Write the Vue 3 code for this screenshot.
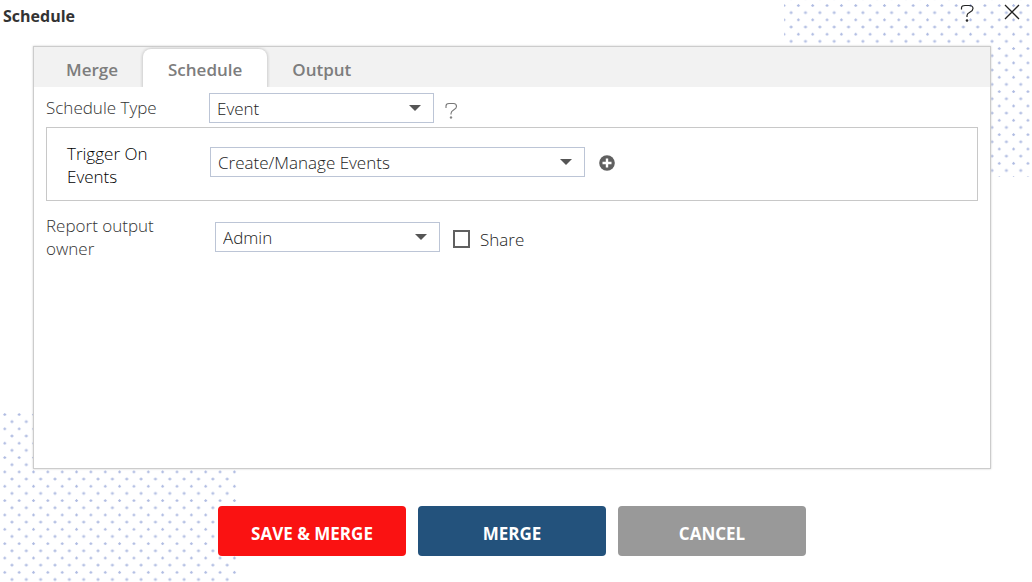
<script setup>
import { ref } from 'vue'

const tabs = ['Merge', 'Schedule', 'Output']
const activeTab = ref('Schedule')
const scheduleType = ref('Event')
const trigger = ref('Create/Manage Events')
const owner = ref('Admin')
const share = ref(false)
</script>

<template>
  <main class="dialog">
    <svg class="dots dots-top" aria-hidden="true">
      <defs>
        <pattern id="dots-top" x="-7.2" y="-1.7" width="14.35" height="14.35" patternUnits="userSpaceOnUse">
          <path d="M7.2 5.7v3M5.7 7.2h3M14.35 -1.5v3M12.85 0h3M0 -1.5v3M-1.5 0h3M0 12.85v3M-1.5 14.35h3M14.35 12.85v3M12.85 14.35h3" stroke="#b0bce2" stroke-width="1.2" />
        </pattern>
      </defs>
      <rect width="100%" height="100%" fill="url(#dots-top)" />
    </svg>
    <svg class="dots dots-bottom" aria-hidden="true">
      <defs>
        <pattern id="dots-bottom" x="-2.4" y="-4.7" width="14.35" height="14.35" patternUnits="userSpaceOnUse">
          <path d="M7.2 5.7v3M5.7 7.2h3M14.35 -1.5v3M12.85 0h3M0 -1.5v3M-1.5 0h3M0 12.85v3M-1.5 14.35h3M14.35 12.85v3M12.85 14.35h3" stroke="#b0bce2" stroke-width="1.2" />
        </pattern>
      </defs>
      <rect width="100%" height="100%" fill="url(#dots-bottom)" />
    </svg>

    <header class="titlebar">
      <h1>Schedule</h1>
      <div class="window-actions">
        <button type="button" class="icon-button" aria-label="Help">
          <svg width="14" height="20" viewBox="0 0 14 20" fill="none" stroke="#222" stroke-width="1.2">
            <path d="M1.500 5.500V4C1.500 2 3 1.500 5 1.500H9C11.500 1.500 13 2.500 13 4.500C13 8.500 7 8 7 11.500V13" />
            <circle cx="7" cy="16.500" r="1" fill="#222" stroke-width="0.600" />
          </svg>
        </button>
        <button type="button" class="icon-button" aria-label="Close">
          <svg width="16" height="16" viewBox="0 0 16 16" stroke="#222" stroke-width="1.300">
            <path d="M1 1L15 15M15 1L1 15" />
          </svg>
        </button>
      </div>
    </header>

    <section class="panel">
      <nav class="tabs" role="tablist">
        <button
          v-for="tab in tabs"
          :key="tab"
          type="button"
          role="tab"
          class="tab"
          :class="{ active: tab === activeTab }"
          :aria-selected="tab === activeTab"
          @click="activeTab = tab"
        >{{ tab }}</button>
      </nav>

      <div class="form">
        <div class="row type-row">
          <label class="label" for="type">Schedule Type</label>
          <div class="select-box">
            <select id="type" v-model="scheduleType"><option>Event</option></select>
            <svg class="arrow" width="12" height="6" viewBox="0 0 12 6"><path d="M0 0H12L6 6Z" fill="#555" /></svg>
          </div>
          <button type="button" class="icon-button hint" aria-label="Schedule type help">
            <svg width="13" height="18" viewBox="0 0 13 18" fill="none" stroke="#777" stroke-width="1.100">
              <path d="M1 6V4C1 2 2.200 1.500 4 1.500H8.500C10.700 1.500 11.500 2.500 11.500 4.500C11.500 8 6 7.500 6 11.500V12.500" />
              <circle cx="6" cy="15.500" r="0.900" fill="#777" stroke-width="0.500" />
            </svg>
          </button>
        </div>

        <div class="row trigger-row">
          <label class="label" for="trigger">Trigger On Events</label>
          <div class="select-box wide">
            <select id="trigger" v-model="trigger"><option>Create/Manage Events</option></select>
            <svg class="arrow" width="12" height="6" viewBox="0 0 12 6"><path d="M0 0H12L6 6Z" fill="#555" /></svg>
          </div>
          <button type="button" class="icon-button add" aria-label="Add event">
            <svg width="16" height="16" viewBox="0 0 16 16">
              <circle cx="8" cy="8" r="7.800" fill="#606060" />
              <path d="M8 3.500V12.500M3.500 8H12.500" stroke="#fff" stroke-width="2.400" />
            </svg>
          </button>
        </div>

        <div class="row owner-row">
          <label class="label" for="owner">Report output owner</label>
          <div class="select-box">
            <select id="owner" v-model="owner"><option>Admin</option></select>
            <svg class="arrow" width="12" height="6" viewBox="0 0 12 6"><path d="M0 0H12L6 6Z" fill="#555" /></svg>
          </div>
          <label class="share"><input v-model="share" type="checkbox" />Share</label>
        </div>
      </div>
    </section>

    <footer class="actions">
      <button type="button" class="action save">SAVE &amp; MERGE</button>
      <button type="button" class="action merge">MERGE</button>
      <button type="button" class="action cancel">CANCEL</button>
    </footer>
  </main>
</template>

<style>
body {
  margin: 0;
  background: #fff;
}
</style>

<style scoped>
* {
  box-sizing: border-box;
}
.dialog {
  position: relative;
  display: flex;
  flex-direction: column;
  min-height: 100vh;
  overflow: hidden;
  isolation: isolate;
  font-family: "Open Sans", "Noto Sans", sans-serif;
  font-size: 17px;
  font-weight: 300;
  line-height: 23px;
  color: #222;
}
button,
select {
  font: inherit;
  color: inherit;
  border: 0;
  margin: 0;
  padding: 0;
  background: none;
}
.dots {
  position: absolute;
  z-index: -1;
}
.dots-top {
  top: 0;
  right: 2px;
  width: 246px;
  height: 177px;
}
.dots-bottom {
  left: 0;
  bottom: 0;
  width: 238px;
  height: 170px;
}
.titlebar {
  display: flex;
  justify-content: space-between;
  height: 46px;
  padding: 4px 12px 0 3px;
}
h1 {
  margin: 0;
  font-size: 16px;
  font-weight: 700;
  line-height: 24px;
  color: #333;
}
.window-actions {
  display: flex;
  align-items: flex-start;
  gap: 30px;
}
.icon-button {
  display: flex;
  cursor: pointer;
}
.panel {
  flex: 1;
  margin: 0 41px 0 33px;
  border: 1px solid #ccc;
  box-shadow: 0 0 2px #ccc;
  background: #fff;
}
.tabs {
  display: flex;
  height: 40px;
  padding: 2px 0 0 7px;
  background: #f2f2f2;
}
.tab {
  padding: 2px 25px 0;
  border-radius: 8px 8px 0 0;
  font-size: 17px;
  font-weight: 600;
  color: #7d7d7d;
}
.tab.active {
  background: #fff;
  box-shadow: 0 0 3px 1px #ccc;
  clip-path: inset(-3px -3px 0 -3px);
}
.form {
  padding: 6px 12px;
}
.row {
  display: flex;
}
.label {
  flex: none;
  width: 163px;
  color: #333;
}
.type-row {
  height: 34px;
}
.type-row .label {
  padding-top: 3px;
}
.select-box {
  position: relative;
  width: 225px;
  height: 30px;
}
.select-box.wide {
  width: 375px;
}
select {
  appearance: none;
  width: 100%;
  height: 100%;
  padding: 0 30px 0 7px;
  border: 1px solid #bcc5d6;
  border-radius: 0;
  background: #fff;
  color: #222;
}
.arrow {
  position: absolute;
  top: 12px;
  right: 13px;
  pointer-events: none;
}
.hint {
  margin: 9px 0 0 11px;
  align-self: flex-start;
}
.trigger-row {
  padding: 14px 20px 12px;
  border: 1px solid #c8c8c8;
}
.trigger-row .label {
  width: 143px;
  padding-right: 50px;
  color: #000;
}
.trigger-row .select-box {
  margin-top: 5px;
}
.add {
  margin: 13px 0 0 14px;
  align-self: flex-start;
}
.owner-row {
  padding-top: 13px;
}
.owner-row .label {
  width: 169px;
  padding-right: 50px;
}
.owner-row .select-box {
  margin-top: 8px;
}
.share {
  display: flex;
  gap: 10px;
  margin: 14px 0 0 13px;
  align-self: flex-start;
}
.share input {
  appearance: none;
  width: 17px;
  height: 18px;
  margin: 2px 0 0;
  border: 2px solid #606060;
  background: #fff;
}
.share input:checked {
  background: #606060;
}
.actions {
  display: flex;
  justify-content: center;
  gap: 12px;
  padding: 37px 8px 26px 0;
}
.action {
  width: 188px;
  height: 50px;
  padding-top: 4px;
  border-radius: 4px;
  font-size: 17px;
  font-weight: 700;
  color: #fff;
}
.save {
  background: #fa1212;
}
.merge {
  background: #23527c;
}
.cancel {
  background: #999;
}
</style>
